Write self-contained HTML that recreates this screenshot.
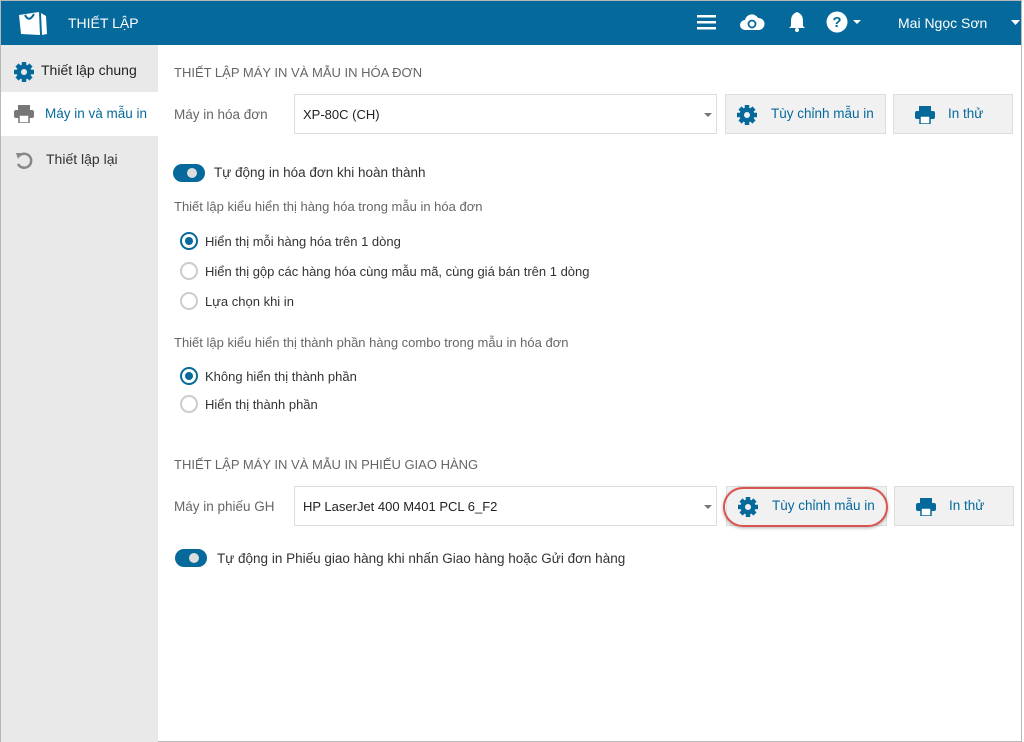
<!DOCTYPE html>
<html><head><meta charset="utf-8"><style>
*{box-sizing:border-box;margin:0;padding:0}
body{width:1024px;height:742px;background:#fff;font-family:"Liberation Sans",sans-serif;font-size:13px;color:#333;position:relative;overflow:hidden}
.frame{position:absolute;left:0;top:0;width:1022px;height:742px;border:1px solid #b8b8b8}
.hdr{position:absolute;left:1px;top:1px;width:1020px;height:44px;background:#05699b;color:#fff}
.side{position:absolute;left:1px;top:45px;width:157px;height:697px;background:#e9e9e9}
.si{position:absolute;left:0;width:157px;height:44px;font-size:14px;color:#222}
.a{position:absolute;color:#333;white-space:nowrap}
.gray{color:#666}
.sel{position:absolute;left:294px;width:423px;height:40px;border:1px solid #ddd;background:#fff;font-size:13px;padding:12px 8px;color:#222}
.sel:after{content:"";position:absolute;right:4px;top:18px;border:4px solid transparent;border-top:4px solid #777}
.btn{position:absolute;height:40px;background:#f1f1f1;border:1px solid #ddd;color:#05699b;font-size:13.5px}
.btn span{position:absolute;top:11px}
.tog{position:absolute;left:173px;width:32px;height:18px;border-radius:9px;background:#05699b}
.tog:after{content:"";position:absolute;left:14px;top:4px;width:10px;height:10px;border-radius:5px;background:#ddd}
.rad{position:absolute;left:180px;width:18px;height:18px;border-radius:50%;border:2px solid #ccc;background:#fff}
.rad.on{border-color:#05699b}
.rad.on:after{content:"";position:absolute;left:3px;top:3px;width:8px;height:8px;border-radius:50%;background:#05699b}
</style></head><body>
<div class="frame"></div>
<div class="hdr">
<svg style="position:absolute;left:17px;top:9px" width="30" height="26" viewBox="0 0 30 26"><path d="M1 5 L21 2 L22 25 L3 24 Z" fill="#fff"/><path d="M23 3 L28 6 L29 24 L24 25Z" fill="#fff"/><path d="M7 5 Q11 13 16 4" stroke="#05699b" stroke-width="2" fill="none"/></svg>
<div class="a" style="left:67px;top:14px;color:#fff;font-size:14px">THIẾT LẬP</div>
<svg style="position:absolute;left:696px;top:13px" width="20" height="16"><rect y="1" width="19" height="2.5" fill="#fff"/><rect y="7" width="19" height="2.5" fill="#fff"/><rect y="13" width="19" height="2.5" fill="#fff"/></svg>
<svg style="position:absolute;left:738px;top:11px" width="26" height="20" viewBox="0 0 26 20"><path d="M6 18 A5 5 0 0 1 6 8 A7 7 0 0 1 19 6 A6 6 0 0 1 20 18Z" fill="#fff"/><circle cx="13" cy="12" r="3.5" stroke="#05699b" stroke-width="1.8" fill="none"/></svg>
<svg style="position:absolute;left:787px;top:10px" width="18" height="22" viewBox="0 0 18 22"><path d="M9 1 Q3 3 3 10 L3 15 L1 17 L17 17 L15 15 L15 10 Q15 3 9 1Z" fill="#fff"/><circle cx="9" cy="19" r="2" fill="#fff"/></svg>
<svg style="position:absolute;left:825px;top:10px" width="38" height="22" viewBox="0 0 38 22"><circle cx="11" cy="11" r="10.5" fill="#fff"/><text x="11" y="16" font-family="Liberation Sans" font-weight="bold" font-size="15" fill="#05699b" text-anchor="middle">?</text><path d="M27 9 L35 9 L31 13Z" fill="#fff"/></svg>
<div class="a" style="left:897px;top:14px;color:#fff;font-size:14px">Mai Ngọc Sơn</div>
<svg style="position:absolute;left:1010px;top:19px" width="10" height="6"><path d="M0 0 L9 0 L4.5 5Z" fill="#fff"/></svg>
</div>
<div class="side">
<div class="si" style="top:2px"><svg style="position:absolute;left:13px;top:15px" width="20" height="20" viewBox="0 0 20 20"><circle cx="10" cy="10" r="7.5" fill="#05699b"/><g stroke="#05699b" stroke-width="4.5"><path d="M10 0V20M0 10H20M3 3L17 17M17 3L3 17"/></g><circle cx="10" cy="10" r="3" fill="#e9e9e9"/></svg><span class="a" style="left:40px;top:15px;color:#222">Thiết lập chung</span></div>
<div class="si" style="top:47px;background:#fff;height:44px"><svg style="position:absolute;left:13px;top:13px" width="20" height="18" viewBox="0 0 20 18"><rect x="4" y="0" width="12" height="5" fill="#777"/><rect x="0" y="5" width="20" height="8" rx="2" fill="#777"/><rect x="5" y="10" width="10" height="8" fill="#fff" stroke="#777" stroke-width="1.5"/></svg><span class="a" style="left:44px;top:14px;color:#05699b;font-size:13.5px">Máy in và mẫu in</span></div>
<div class="si" style="top:92px"><svg style="position:absolute;left:13px;top:13px" width="20" height="20" viewBox="0 0 20 20"><path d="M5 6 A7 7 0 1 1 4 14" stroke="#888" stroke-width="2.5" fill="none"/><path d="M2 3 L8 3 L4 9Z" fill="#888"/></svg><span class="a" style="left:45px;top:14px">Thiết lập lại</span></div>
</div>

<div class="a gray" style="left:174px;top:65px">THIẾT LẬP MÁY IN VÀ MẪU IN HÓA ĐƠN</div>
<div class="a gray" style="left:174px;top:107px;font-size:13.5px">Máy in hóa đơn</div>
<div class="sel" style="top:94px">XP-80C (CH)</div>
<div class="btn" style="left:725px;top:94px;width:161px"><svg style="position:absolute;left:11px;top:10px" width="20" height="20" viewBox="0 0 20 20"><circle cx="10" cy="10" r="7.5" fill="#05699b"/><g stroke="#05699b" stroke-width="4.5"><path d="M10 0V20M0 10H20M3 3L17 17M17 3L3 17"/></g><circle cx="10" cy="10" r="3" fill="#f1f1f1"/></svg><span style="left:45px">Tùy chỉnh mẫu in</span></div>
<div class="btn" style="left:893px;top:94px;width:120px"><svg style="position:absolute;left:21px;top:11px" width="20" height="18" viewBox="0 0 20 18"><rect x="4" y="0" width="12" height="5" fill="#05699b"/><rect x="0" y="5" width="20" height="8" rx="2" fill="#05699b"/><rect x="5" y="10" width="10" height="8" fill="#fff" stroke="#05699b" stroke-width="1.5"/></svg><span style="left:54px">In thử</span></div>

<div class="tog" style="top:164px"></div>
<div class="a" style="left:214px;top:165px;font-size:13.5px">Tự động in hóa đơn khi hoàn thành</div>
<div class="a gray" style="left:174px;top:199px">Thiết lập kiểu hiển thị hàng hóa trong mẫu in hóa đơn</div>
<div class="rad on" style="top:232px"></div><div class="a" style="left:205px;top:234px">Hiển thị mỗi hàng hóa trên 1 dòng</div>
<div class="rad" style="top:262px"></div><div class="a" style="left:205px;top:264px">Hiển thị gộp các hàng hóa cùng mẫu mã, cùng giá bán trên 1 dòng</div>
<div class="rad" style="top:292px"></div><div class="a" style="left:205px;top:294px">Lựa chọn khi in</div>
<div class="a gray" style="left:174px;top:335px">Thiết lập kiểu hiển thị thành phần hàng combo trong mẫu in hóa đơn</div>
<div class="rad on" style="top:367px"></div><div class="a" style="left:205px;top:369px">Không hiển thị thành phần</div>
<div class="rad" style="top:395px"></div><div class="a" style="left:205px;top:397px">Hiển thị thành phần</div>

<div class="a gray" style="left:174px;top:457px">THIẾT LẬP MÁY IN VÀ MẪU IN PHIẾU GIAO HÀNG</div>
<div class="a gray" style="left:174px;top:499px;font-size:13.5px">Máy in phiếu GH</div>
<div class="sel" style="top:486px">HP LaserJet 400 M401 PCL 6_F2</div>
<div class="btn" style="left:726px;top:486px;width:161px"><svg style="position:absolute;left:11px;top:10px" width="20" height="20" viewBox="0 0 20 20"><circle cx="10" cy="10" r="7.5" fill="#05699b"/><g stroke="#05699b" stroke-width="4.5"><path d="M10 0V20M0 10H20M3 3L17 17M17 3L3 17"/></g><circle cx="10" cy="10" r="3" fill="#f1f1f1"/></svg><span style="left:45px">Tùy chỉnh mẫu in</span></div>
<div style="position:absolute;left:723px;top:487px;width:165px;height:40px;border:2px solid #d9534f;border-radius:20px;box-shadow:0 1px 3px rgba(0,0,0,.3)"></div>
<div class="btn" style="left:894px;top:486px;width:120px"><svg style="position:absolute;left:21px;top:11px" width="20" height="18" viewBox="0 0 20 18"><rect x="4" y="0" width="12" height="5" fill="#05699b"/><rect x="0" y="5" width="20" height="8" rx="2" fill="#05699b"/><rect x="5" y="10" width="10" height="8" fill="#fff" stroke="#05699b" stroke-width="1.5"/></svg><span style="left:54px">In thử</span></div>
<div class="tog" style="top:549px;left:175px"></div>
<div class="a" style="left:217px;top:551px;font-size:13.5px">Tự động in Phiếu giao hàng khi nhấn Giao hàng hoặc Gửi đơn hàng</div>
</body></html>
